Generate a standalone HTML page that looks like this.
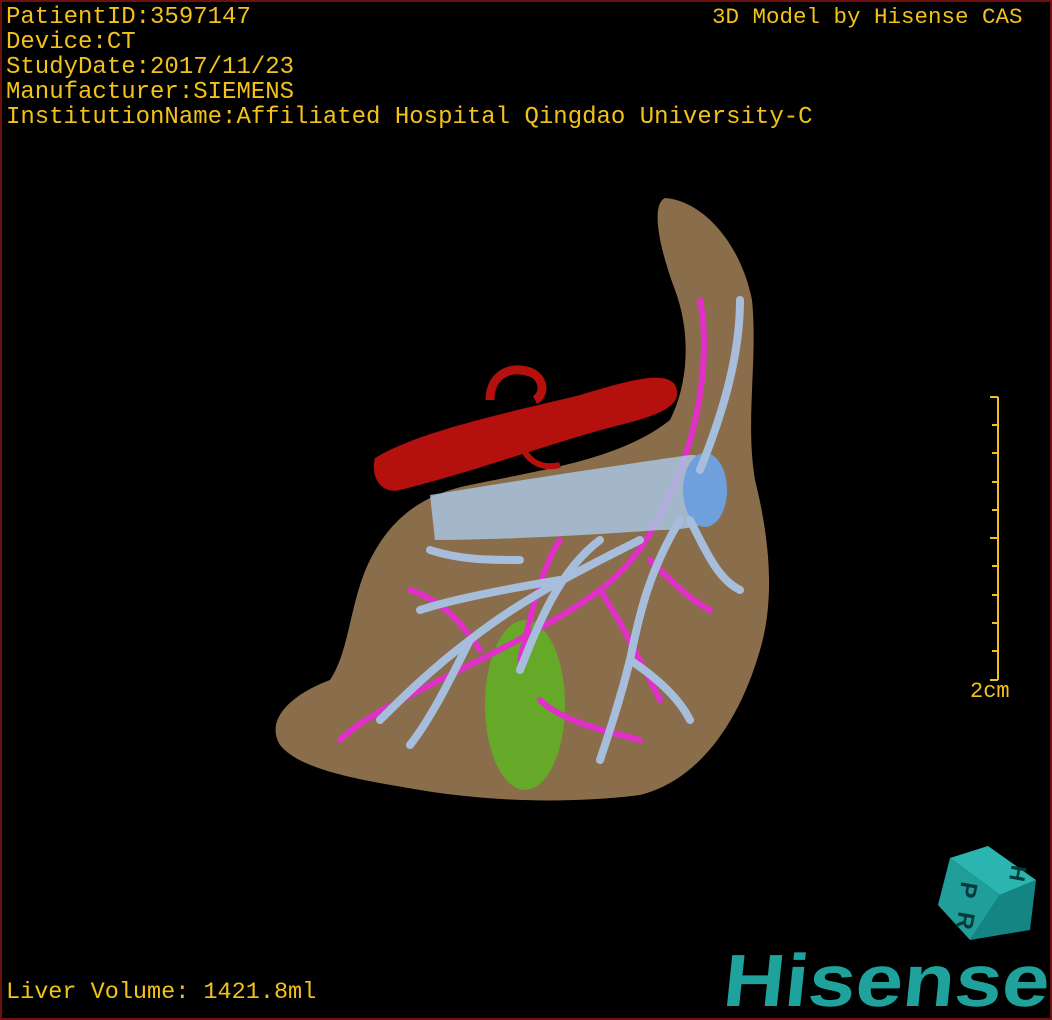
<!DOCTYPE html>
<html><head><meta charset="utf-8"><style>
html,body{margin:0;padding:0;background:#000;}
#f{position:relative;width:1052px;height:1020px;background:#000;overflow:hidden;box-sizing:border-box;border:2px solid #6e1010;}
.t{position:absolute;font-family:"Liberation Mono",monospace;color:#f2c21a;font-size:24px;line-height:25px;white-space:pre;}
</style></head><body><div id="f">
<div class="t" style="left:4px;top:3px">PatientID:3597147
Device:CT
StudyDate:2017/11/23
Manufacturer:SIEMENS
InstitutionName:Affiliated Hospital Qingdao University-C</div>
<div class="t" style="left:710px;top:3px;font-size:22.5px">3D Model by Hisense CAS</div>
<div class="t" style="left:4px;top:978px;font-size:23.5px">Liver Volume: 1421.8ml</div>
<div class="t" style="left:968px;top:677px;font-size:22px">2cm</div>
<svg width="1052" height="1020" style="position:absolute;left:-2px;top:-2px">
<g stroke="#f2c21a" stroke-width="2">
<line x1="998" y1="397" x2="998" y2="680"/>
<line x1="990" y1="397" x2="998" y2="397"/><line x1="992" y1="425" x2="998" y2="425"/>
<line x1="992" y1="453" x2="998" y2="453"/><line x1="992" y1="482" x2="998" y2="482"/>
<line x1="992" y1="510" x2="998" y2="510"/><line x1="990" y1="538" x2="998" y2="538"/>
<line x1="992" y1="566" x2="998" y2="566"/><line x1="992" y1="595" x2="998" y2="595"/>
<line x1="992" y1="623" x2="998" y2="623"/><line x1="992" y1="651" x2="998" y2="651"/>
<line x1="990" y1="680" x2="998" y2="680"/>
</g>
<path d="M665 198 C700 200 740 240 752 300 C758 360 745 420 755 480 C770 540 775 600 760 650 C740 720 700 780 640 795 C560 805 480 800 420 790 C360 780 300 770 280 745 C265 720 290 695 330 680 C350 650 350 600 370 560 C390 520 420 495 470 485 C540 470 620 460 670 420 C690 380 690 330 675 290 C660 250 650 205 665 198 Z" fill="#8a6e4c"/>
<path d="M375 458 C420 430 520 410 580 395 C630 380 665 370 675 385 C685 405 660 415 620 425 C560 440 480 470 400 490 C380 495 370 475 375 458 Z" fill="#b3100e"/>
<path d="M490 400 C490 375 510 365 530 372 C545 378 545 395 535 400" stroke="#b3100e" stroke-width="9" fill="none"/>
<path d="M520 440 C525 460 540 470 560 465" stroke="#b3100e" stroke-width="6" fill="none"/>
<ellipse cx="525" cy="705" rx="40" ry="85" fill="#5fb322" opacity=".85"/>
<g stroke="#e030c8" stroke-width="6" fill="none" stroke-linecap="round">
<path d="M700 300 C710 350 700 420 680 470 C660 520 640 560 600 590 C560 620 500 650 440 680 C400 700 360 720 340 740"/>
<path d="M600 590 C620 620 640 660 660 700"/>
<path d="M560 540 C540 570 530 620 520 660"/>
<path d="M650 560 C670 580 690 600 710 610"/>
<path d="M480 650 C460 620 440 600 410 590"/>
<path d="M540 700 C560 720 600 730 640 740"/>
</g>
<path d="M430 495 C520 480 620 465 690 455 C720 455 725 480 720 505 C715 525 690 530 660 530 C590 535 500 540 435 540 Z" fill="#a8c4e0" opacity=".85"/>
<ellipse cx="705" cy="490" rx="22" ry="37" fill="#6fa0dc"/>
<g stroke="#a6bedc" stroke-width="8" fill="none" stroke-linecap="round">
<path d="M740 300 C740 360 720 420 700 470"/>
<path d="M680 520 C650 570 640 610 630 660 C620 700 610 730 600 760"/>
<path d="M640 540 C580 570 520 600 470 640 C430 670 400 700 380 720"/>
<path d="M600 540 C560 570 540 620 520 670"/>
<path d="M470 640 C450 680 430 720 410 745"/>
<path d="M560 580 C500 590 450 600 420 610"/>
<path d="M690 520 C710 560 720 580 740 590"/>
<path d="M630 660 C660 680 680 700 690 720"/>
<path d="M520 560 C490 560 460 560 430 550"/>
</g>
<g>
<path d="M950 858 L988 846 L1036 880 L1000 895 Z" fill="#2bb5b0"/>
<path d="M950 858 L1000 895 L970 940 L938 905 Z" fill="#1f9e9a"/>
<path d="M1000 895 L1036 880 L1030 930 L970 940 Z" fill="#158583"/>
<text x="960" y="898" font-family="Liberation Sans" font-weight="bold" font-size="24" fill="#053a3a" transform="rotate(100 968 890)">P</text>
<text x="955" y="930" font-family="Liberation Sans" font-weight="bold" font-size="24" fill="#053a3a" transform="rotate(100 965 922)">R</text>
<text x="1005" y="880" font-family="Liberation Sans" font-weight="bold" font-size="22" fill="#053a3a" transform="rotate(100 1015 875)">H</text>
</g>
<text x="722" y="1006" font-family="Liberation Sans" font-weight="bold" font-size="74" fill="#1fa29c" textLength="326" lengthAdjust="spacingAndGlyphs" transform="skewX(-6) translate(105 0)">Hisense</text>
</svg>
</div></body></html>
